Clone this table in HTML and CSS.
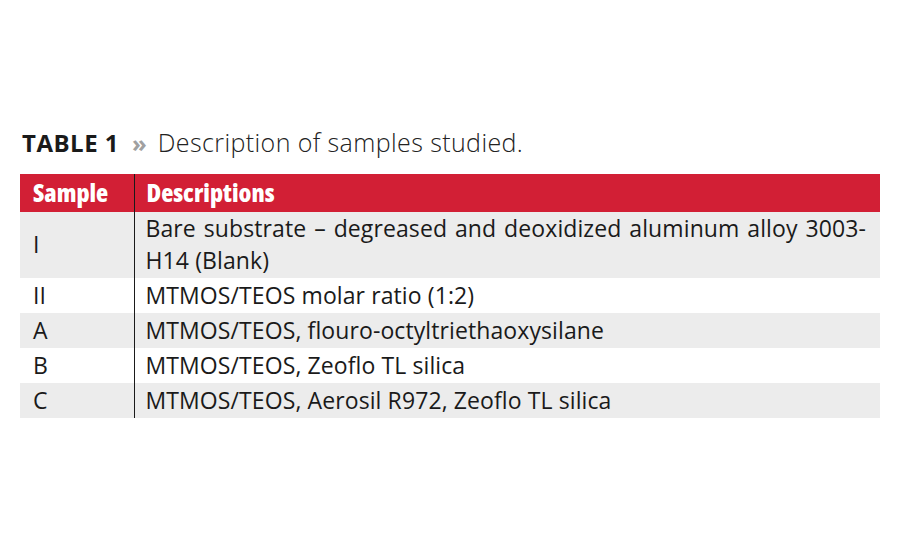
FILE: index.html
```html
<!DOCTYPE html>
<html>
<head>
<meta charset="utf-8">
<link rel="stylesheet" href="styles.css">
</head>
<body>
<div class="page">
  <h1 class="caption"><span class="label">TABLE 1</span><span class="arrow">»</span><span class="desc">Description of samples studied.</span></h1>
  <table class="samples">
    <thead>
      <tr><th class="c1">Sample</th><th class="c2">Descriptions</th></tr>
    </thead>
    <tbody>
      <tr class="shade"><td class="c1">I</td><td class="c2 just">Bare substrate – degreased and deoxidized aluminum alloy 3003-H14 (Blank)</td></tr>
      <tr><td class="c1">II</td><td class="c2">MTMOS/TEOS molar ratio (1:2)</td></tr>
      <tr class="shade"><td class="c1">A</td><td class="c2">MTMOS/TEOS, flouro-octyltriethaoxysilane</td></tr>
      <tr><td class="c1">B</td><td class="c2">MTMOS/TEOS, Zeoflo TL silica</td></tr>
      <tr class="shade"><td class="c1">C</td><td class="c2">MTMOS/TEOS, Aerosil R972, Zeoflo TL silica</td></tr>
    </tbody>
  </table>
</div>
</body>
</html>
```

FILE: styles.css
```css
html, body {
  margin: 0;
  padding: 0;
  background: #ffffff;
}
.page {
  padding: 127px 20px 0 20px;
  font-family: "Open Sans", "DejaVu Sans", sans-serif;
  color: #1a1a1a;
}
.caption {
  margin: 0 0 16px 2px;
  font-size: 24px;
  line-height: 30px;
  font-weight: 400;
  white-space: nowrap;
}
.caption .label {
  font-weight: 700;
  color: #1a1a1a;
  letter-spacing: 0.5px;
}
.caption .arrow {
  font-weight: 700;
  color: #a0a0a0;
  margin: 0 11px 0 13px;
}
.caption .desc {
  font-weight: 300;
  font-size: 25px;
  letter-spacing: 0.4px;
  color: #222;
}
.samples {
  width: 860px;
  border-collapse: collapse;
  table-layout: fixed;
}
.samples th {
  background: #d21f35;
  color: #ffffff;
  height: 37.5px;
  padding: 0;
  text-align: left;
  font-family: "Open Sans", "Liberation Sans Narrow", sans-serif;
  font-stretch: 75%;
  font-weight: 800;
  font-size: 25px;
  line-height: 37px;
  vertical-align: middle;
}
.samples .c1 {
  width: 114px;
  padding-left: 13px;
  box-sizing: border-box;
  border-right: 1.5px solid #1a1a1a;
}
.samples th.c2 {
  padding-left: 12px;
}
.samples td {
  font-size: 23px;
  letter-spacing: 0.1px;
  line-height: 31.6px;
  padding-top: 1.7px;
  padding-bottom: 1.7px;
  color: #1a1a1a;
  vertical-align: middle;
}
.samples td.c2 {
  padding-left: 11px;
  padding-right: 14px;
}
.samples td.just {
  text-align: justify;
}
.samples tr.shade td {
  background: #ececec;
}
```
